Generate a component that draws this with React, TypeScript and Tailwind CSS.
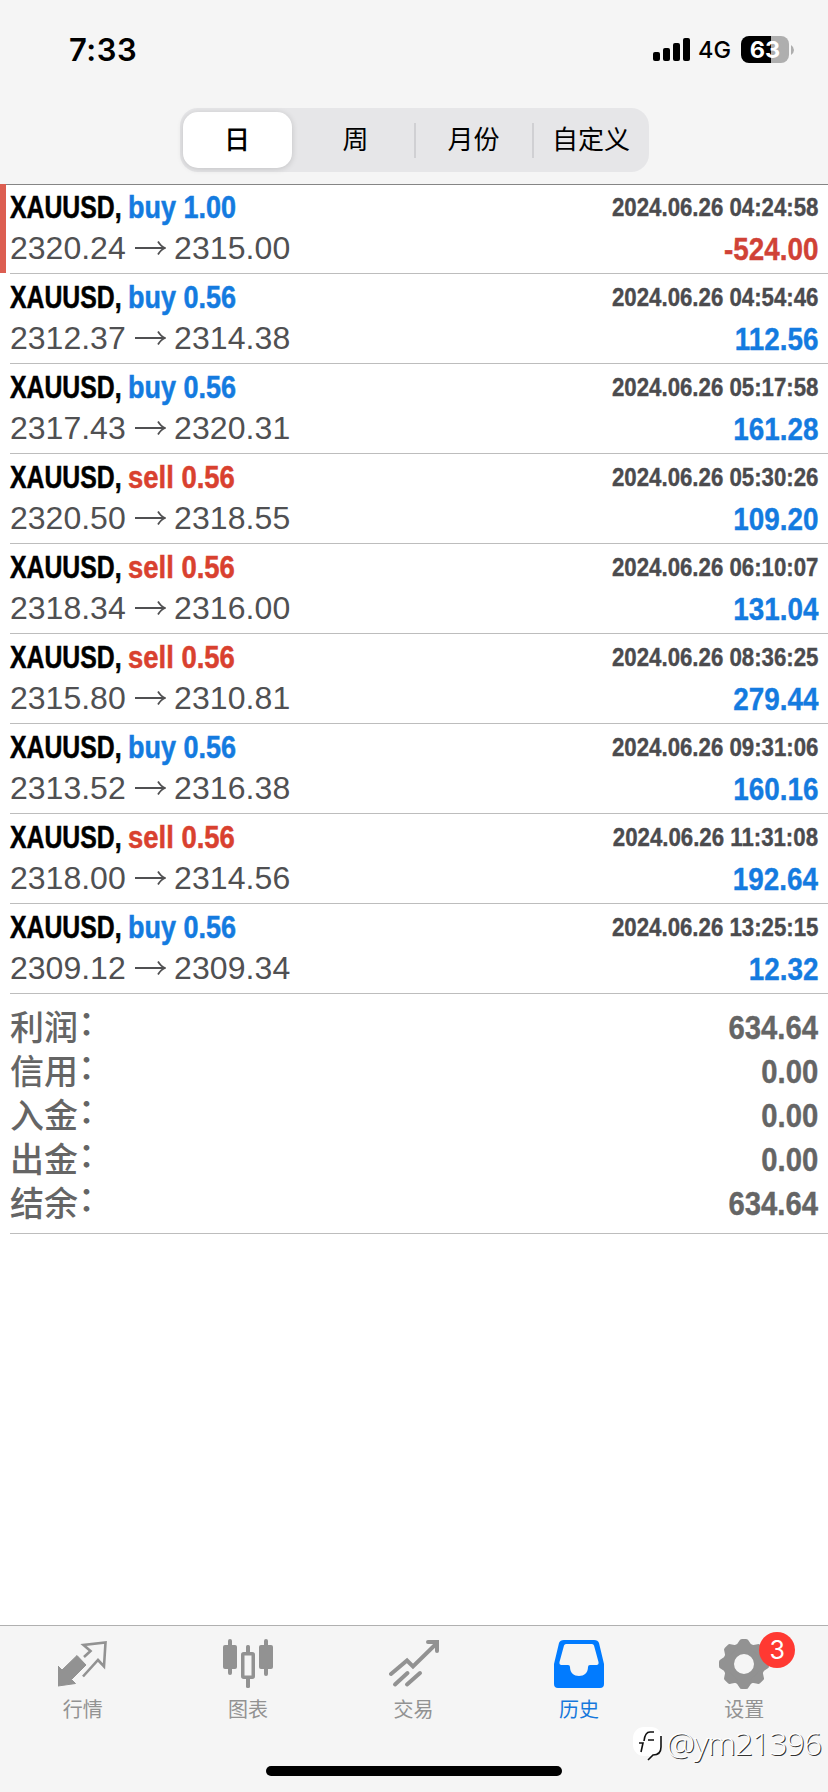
import type { ReactNode } from "react";

type Deal = {
  side: "buy" | "sell";
  volume: string;
  open: string;
  close: string;
  time: string;
  profit: string;
};

const deals: Deal[] = [
  { side: "buy", volume: "1.00", open: "2320.24", close: "2315.00", time: "04:24:58", profit: "-524.00" },
  { side: "buy", volume: "0.56", open: "2312.37", close: "2314.38", time: "04:54:46", profit: "112.56" },
  { side: "buy", volume: "0.56", open: "2317.43", close: "2320.31", time: "05:17:58", profit: "161.28" },
  { side: "sell", volume: "0.56", open: "2320.50", close: "2318.55", time: "05:30:26", profit: "109.20" },
  { side: "sell", volume: "0.56", open: "2318.34", close: "2316.00", time: "06:10:07", profit: "131.04" },
  { side: "sell", volume: "0.56", open: "2315.80", close: "2310.81", time: "08:36:25", profit: "279.44" },
  { side: "buy", volume: "0.56", open: "2313.52", close: "2316.38", time: "09:31:06", profit: "160.16" },
  { side: "sell", volume: "0.56", open: "2318.00", close: "2314.56", time: "11:31:08", profit: "192.64" },
  { side: "buy", volume: "0.56", open: "2309.12", close: "2309.34", time: "13:25:15", profit: "12.32" },
];

const summary = [
  ["利润", "634.64"],
  ["信用", "0.00"],
  ["入金", "0.00"],
  ["出金", "0.00"],
  ["结余", "634.64"],
];

function StatusBar() {
  return (
    <div className="flex h-[108px] items-start justify-between pr-[34px] pl-[69px] font-['Inter',sans-serif] text-black">
      <span className="mt-[32px] text-[31px] leading-[36px] font-semibold tracking-[0.5px]">7:33</span>
      <div className="mt-[36px] flex h-[27px] items-center">
        <svg className="h-[23px] w-[37px]" viewBox="0 0 37 23">
          <rect x="0" y="14" width="7" height="9" rx="2" />
          <rect x="10" y="10" width="7" height="13" rx="2" />
          <rect x="20" y="5" width="7" height="18" rx="2" />
          <rect x="30" y="0" width="7" height="23" rx="2" />
        </svg>
        <span className="ml-[8px] w-[43px] text-[23.5px] leading-[27px] font-medium">4G</span>
        <div className="flex h-[27px] w-[48px] items-center justify-center rounded-[8px] bg-linear-to-r from-black from-[62.5%] to-[#aeaeae] to-[62.5%] text-[23.5px] leading-[27px] font-bold text-white">
          63
        </div>
        <svg className="ml-[2px] h-[10px] w-[3px]" viewBox="0 0 3 10">
          <path d="M0 0q3 2 3 5t-3 5z" fill="#aeaeae" />
        </svg>
      </div>
    </div>
  );
}

function Segments() {
  return (
    <div className="mx-auto flex h-[64px] w-[469px] items-center rounded-[18px] bg-[#e6e6e8] text-[26px] leading-[36px] text-black">
      <div className="ml-[3px] flex h-[56px] w-[109px] items-center justify-center rounded-[15px] bg-white font-medium shadow-[0_1px_6px_rgba(0,0,0,0.16)]">日</div>
      <div className="ml-[6px] flex-1 text-center">周</div>
      <div className="h-[35px] w-[2px] bg-[#d0d0d3]" />
      <div className="w-[116px] text-center">月份</div>
      <div className="h-[35px] w-[2px] bg-[#d0d0d3]" />
      <div className="w-[115px] text-center">自定义</div>
    </div>
  );
}

function DealRow({ deal, marked }: { deal: Deal; marked: boolean }) {
  const sideColor = deal.side === "buy" ? "scale-x-[0.87] text-[#147be0]" : "scale-x-[0.885] text-[#d9412f]";
  const profitColor = deal.profit.startsWith("-") ? "text-[#d04236]" : "text-[#147be0]";
  return (
    <div className="flex h-[90px]">
      <div className={marked ? "h-[89px] w-[6px] bg-[#dc5e51]" : "w-[6px]"} />
      <div className="ml-[4px] flex flex-1 justify-between border-b border-[#bdbdbd] pr-[10px]">
        <div className="pt-[6px]">
          <div className="flex h-[36px] text-[31px] leading-[36px] font-bold [-webkit-text-stroke:0.5px_currentColor]">
            <span className="w-[118px] origin-left scale-x-[0.8] whitespace-nowrap text-black">XAUUSD,</span>
            <span className={`origin-left whitespace-nowrap ${sideColor}`}>
              {deal.side} {deal.volume}
            </span>
          </div>
          <div className="flex h-[42px] items-center text-[32px] leading-[42px] text-[#505052]">
            <span className="w-[125px] pt-[2px]">{deal.open}</span>
            <svg className="mt-[4px] mr-[8px] h-[16px] w-[31px]" viewBox="0 0 31 16" fill="none" stroke="currentColor" strokeWidth="1.8">
              <path d="M0 7h30M23 .5q3 5 7 6.500q-4 1.500-7 6.500" />
            </svg>
            <span className="pt-[2px] tracking-[0.1px]">{deal.close}</span>
          </div>
        </div>
        <div className="pt-[5px] text-right font-bold [-webkit-text-stroke:0.4px_currentColor]">
          <div className="h-[36px] origin-right scale-x-[0.855] text-[26px] leading-[37px] text-[#4b4b4e]">2024.06.26 {deal.time}</div>
          <div className={`h-[42px] origin-right scale-x-[0.87] text-[32px] leading-[48px] ${profitColor}`}>{deal.profit}</div>
        </div>
      </div>
    </div>
  );
}

function Summary() {
  return (
    <div className="ml-[10px] h-[240px] border-b border-[#bdbdbd] pt-[10px] pr-[10px] text-[#656565]">
      {summary.map(([label, value]) => (
        <div key={label} className="flex h-[44px] items-center justify-between">
          <div className="flex font-['Noto_Sans_CJK_SC',sans-serif] text-[34px] leading-[44px] font-medium">
            <span>{label}</span>
            <span className="-mt-[5px]">：</span>
          </div>
          <span className="origin-right scale-x-[0.86] pt-[2px] text-[34px] leading-[42px] font-bold [-webkit-text-stroke:0.4px_currentColor]">{value}</span>
        </div>
      ))}
    </div>
  );
}

function QuotesIcon() {
  return (
    <svg className="h-[50px] w-[50px]" viewBox="1 0 50 50">
      <path d="M20 16.500 29 26 14.500 40.500 18.500 44.500 1 47V27L5 31z" fill="#929292" stroke="#929292" strokeLinejoin="round" />
      <path d="M27 18 33.500 12 26.500 6 48.500 3.500 47 27.500 41 21 26 37.500" fill="none" stroke="#929292" strokeWidth="2.600" />
    </svg>
  );
}

function ChartIcon() {
  return (
    <svg className="h-[50px] w-[50px]" viewBox="0 0 50 50" fill="#929292">
      <rect x="0" y="6" width="14" height="24" rx="2" />
      <rect x="5" y="0" width="4" height="36" rx="2" />
      <rect x="36" y="6" width="14" height="24" rx="2" />
      <rect x="41" y="0" width="4" height="37" rx="2" />
      <rect x="19.750" y="14.750" width="10.500" height="23.500" rx="1" fill="none" stroke="#929292" strokeWidth="3.500" />
      <rect x="23" y="6" width="4" height="9" rx="1.500" />
      <rect x="23" y="38" width="4" height="11" rx="1.500" />
    </svg>
  );
}

function TradeIcon() {
  return (
    <svg className="h-[50px] w-[50px]" viewBox="0 0 50 50" fill="none" stroke="#929292" strokeWidth="4" strokeLinecap="round">
      <path d="M2 35 18 21.500 24 27.500 48 4" />
      <path d="M39 3H48V12" />
      <path d="M6 45.500 18.500 34M18 45.500 31 34" />
    </svg>
  );
}

function HistoryIcon() {
  return (
    <svg className="h-[50px] w-[50px]" viewBox="0 0 50 50" fill="#017bff" fillRule="evenodd">
      <path d="M10 1H40Q44 1 45 4L50 25V45Q50 49 46 49H4Q0 49 0 45V25L5 4Q6 1 10 1ZM12 5Q10.500 5 10 6.500L5.500 23Q5 26 7.500 26H14Q16 26 16 28C16 34 20 37 25 37S34 34 34 28Q34 26 36 26H42.500Q45 26 44.500 23L40 6.500Q39.500 5 38 5Z" />
    </svg>
  );
}

function SettingsIcon() {
  return (
    <div className="relative h-[50px] w-[50px]">
      <svg className="h-[50px] w-[50px]" viewBox="0 0 50 50" fill="#929292">
        <circle cx="25" cy="25" r="15.500" fill="none" stroke="#929292" strokeWidth="11" />
        {[0, 45, 90, 135, 180, 225, 270, 315].map((angle) => (
          <path key={angle} d="M17.500 6 20.500 1.500Q21 0 23 0H27Q29 0 29.500 1.500L32.500 6V9H17.500Z" transform={`rotate(${angle} 25 25)`} />
        ))}
      </svg>
      <span className="absolute -top-[7px] left-[40px] flex h-[36px] w-[36px] items-center justify-center rounded-full bg-[#ff3932] font-['Inter',sans-serif] text-[25px] leading-[36px] text-white">
        3
      </span>
    </div>
  );
}

function Tab({ label, active, children }: { label: string; active?: boolean; children: ReactNode }) {
  return (
    <div className="flex flex-1 flex-col items-center pt-[13px]">
      {children}
      <span className={`mt-[6px] text-[20px] leading-[30px] ${active ? "text-[#1578dc]" : "text-[#929292]"}`}>{label}</span>
    </div>
  );
}

function Watermark() {
  return (
    <div className="absolute top-[1720px] right-[7px] flex items-center">
      <svg className="h-[38px] w-[34px]" viewBox="0 0 34 38" fill="none">
        <rect x="1" y="3" width="29" height="29" rx="11" fill="#fff" />
        <path d="M7 19H11L9 28M12 17Q13 8 18 8H22M16 16H22M29 12V23Q29 31 21 31L16 36" stroke="#111" strokeWidth="1.600" />
      </svg>
      <span className="text-[32px] leading-[46px] font-light tracking-[-1px] text-white [text-shadow:1px_1px_0_#333] font-['Open_Sans',sans-serif]">@ym21396</span>
    </div>
  );
}

export default function App() {
  return (
    <div className="relative flex h-[1792px] w-[828px] flex-col overflow-hidden bg-white font-['Liberation_Sans','Noto_Sans_CJK_SC',sans-serif]">
      <header className="h-[185px] shrink-0 border-b border-[#858585] bg-[#f5f5f5]">
        <StatusBar />
        <Segments />
      </header>
      <main className="flex-1">
        <div className="-mt-px">
          {deals.map((deal, i) => (
            <DealRow key={deal.time} deal={deal} marked={i === 0} />
          ))}
        </div>
        <Summary />
      </main>
      <footer className="flex h-[167px] shrink-0 flex-col border-t border-[#b0b0b0] bg-[#f5f5f5]">
        <nav className="mr-[1px] flex flex-1">
          <Tab label="行情"><QuotesIcon /></Tab>
          <Tab label="图表"><ChartIcon /></Tab>
          <Tab label="交易"><TradeIcon /></Tab>
          <Tab label="历史" active><HistoryIcon /></Tab>
          <Tab label="设置"><SettingsIcon /></Tab>
        </nav>
        <div className="mx-auto mb-[16px] h-[10px] w-[296px] rounded-full bg-black" />
      </footer>
      <Watermark />
    </div>
  );
}
